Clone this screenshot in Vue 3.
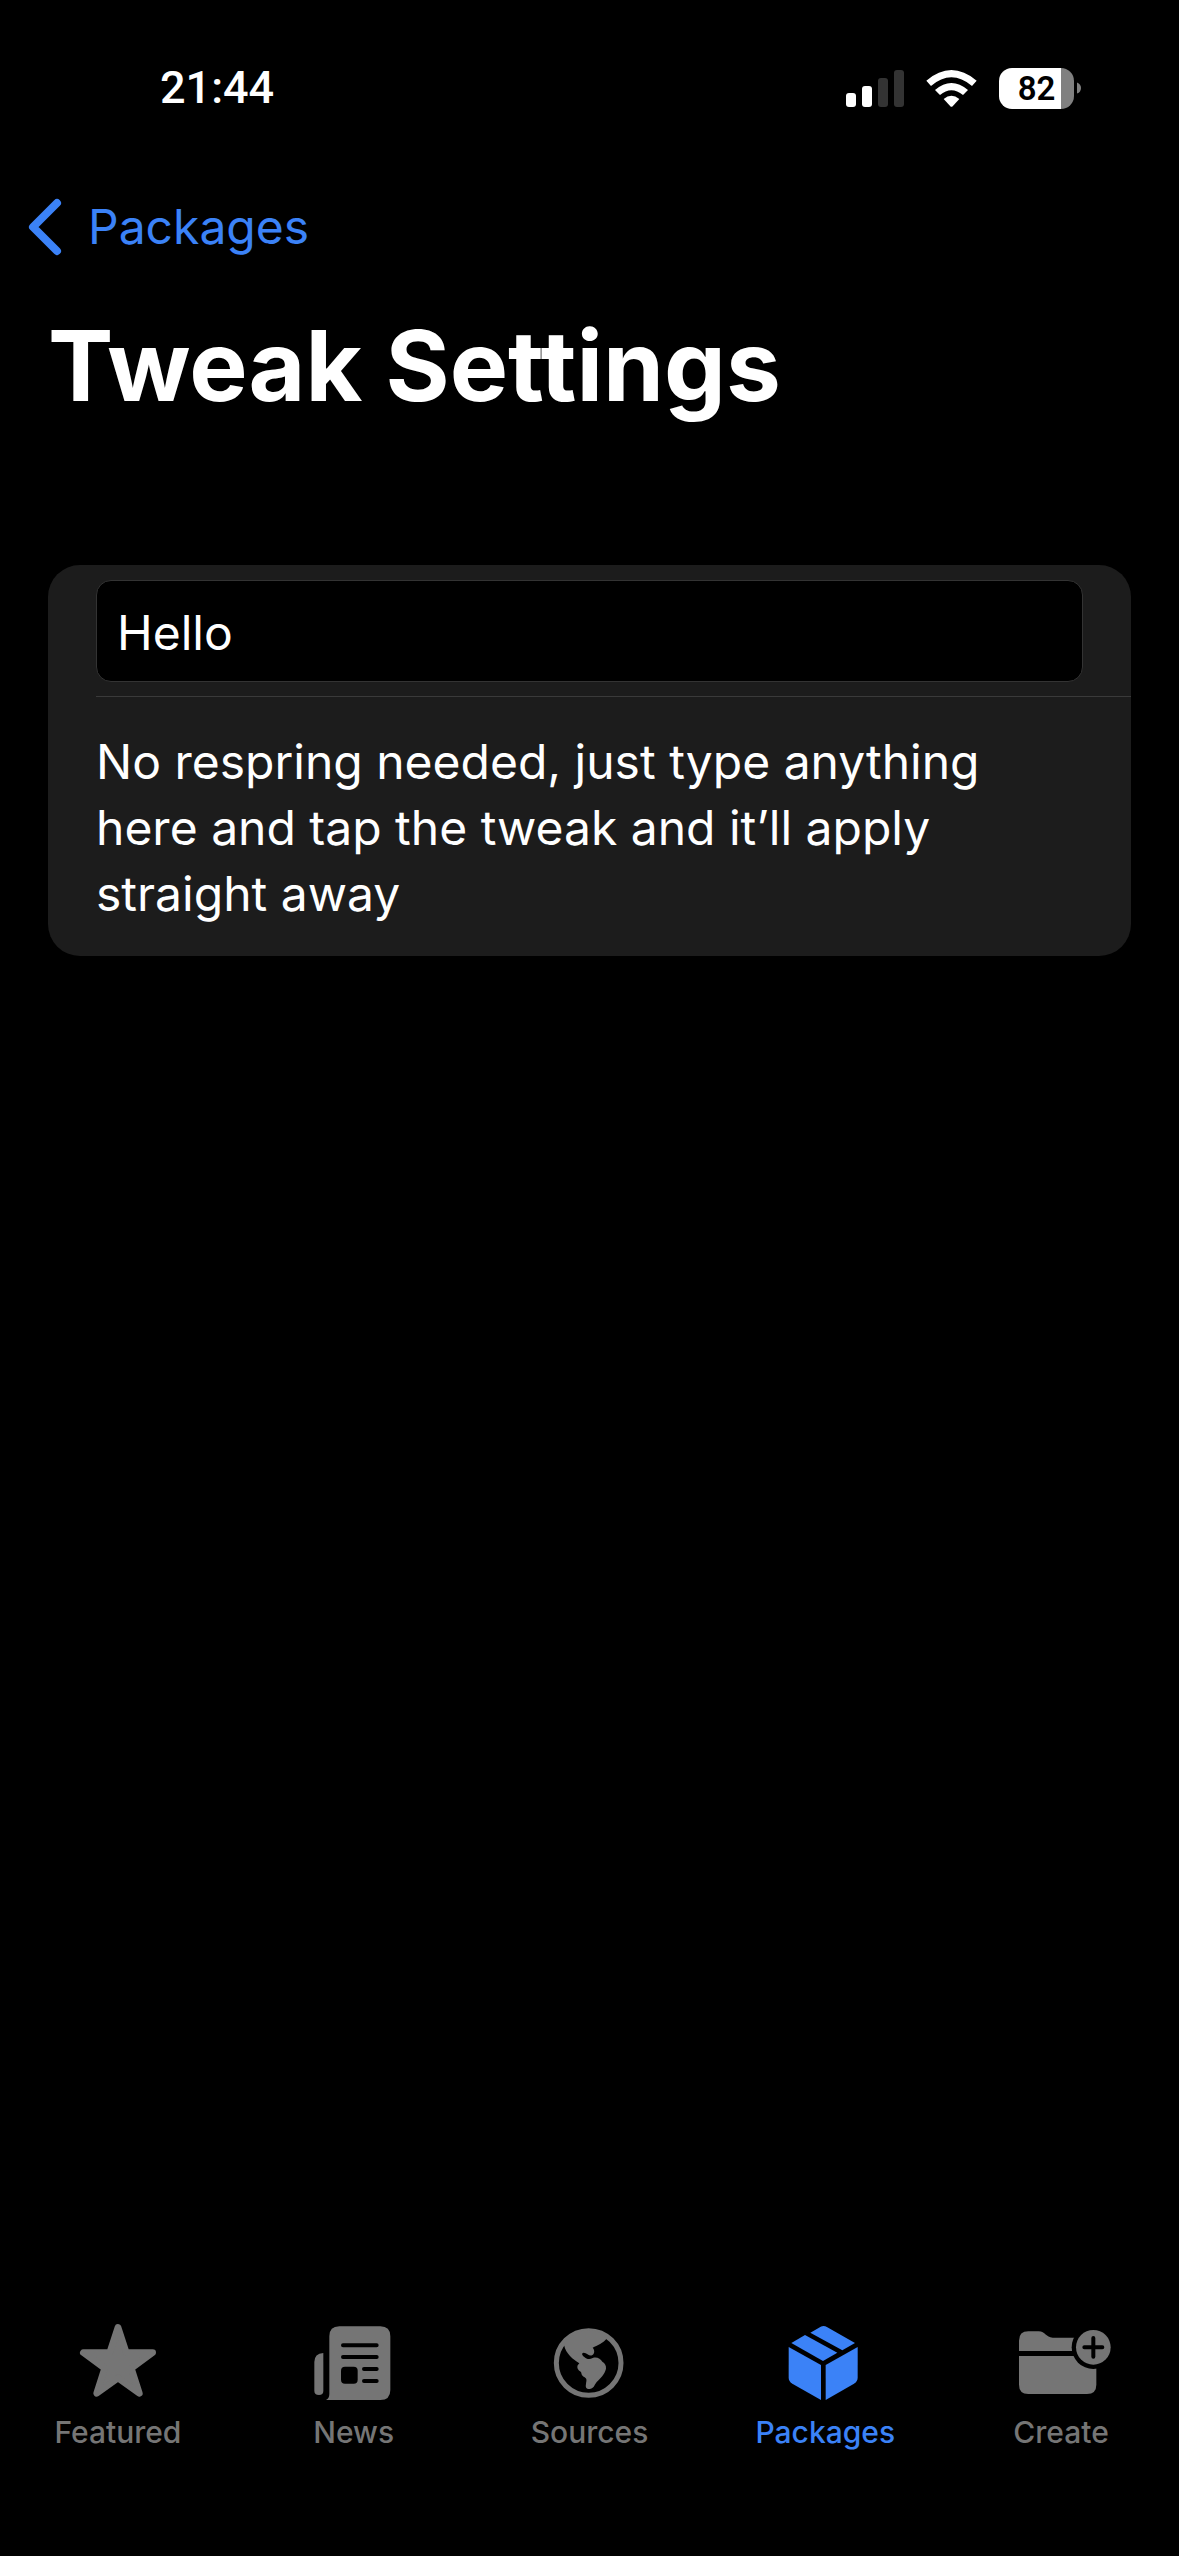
<script setup>
import { ref } from 'vue'

const message = ref('Hello')
const tabs = [
  { id: 'featured', label: 'Featured', viewBox: '85 30 300 252' },
  { id: 'news', label: 'News', viewBox: '71 30 300 252' },
  { id: 'sources', label: 'Sources', viewBox: '88 30 300 252' },
  { id: 'packages', label: 'Packages', viewBox: '106 30 300 252' },
  { id: 'create', label: 'Create', viewBox: '63 30 300 252' }
]
const active = ref('packages')
</script>

<template>
  <div class="screen">
    <header class="status">
      <time class="clock">21:44</time>
      <div class="indicators">
        <svg class="signal" viewBox="0 0 58 41" aria-hidden="true">
          <rect x="0" y="25" width="10" height="14" rx="3" fill="#fff" />
          <rect x="16" y="18" width="10" height="21" rx="3" fill="#fff" />
          <rect x="32" y="10" width="10" height="29" rx="3" fill="#333" />
          <rect x="48" y="2" width="10" height="37" rx="3" fill="#333" />
        </svg>
        <svg class="wifi" viewBox="318 51 153 123" aria-hidden="true" fill="#fff">
          <path d="M319 89 Q394 25 470 89 L456 105 Q394 53 333 105 Z" />
          <path d="M345 117 Q394 75 444 117 L429 132 Q394 103 360 132 Z" />
          <path d="M371 144 Q394 125 418 144 L398 166 Q394 169 391 166 Z" />
        </svg>
        <div class="battery">
          <span class="level">82</span>
          <svg class="cap" viewBox="0 0 5 14" aria-hidden="true"><path d="M0 0 Q5 2 5 7 Q5 12 0 14 Z" fill="#808080" /></svg>
        </div>
      </div>
    </header>

    <nav class="topbar">
      <a class="back" href="#packages">
        <svg class="chevron" viewBox="0 0 34 58" aria-hidden="true">
          <path d="M29 5 L5 29 L29 53" fill="none" stroke="currentColor" stroke-width="8" stroke-linecap="round" stroke-linejoin="round" />
        </svg>
        <span>Packages</span>
      </a>
    </nav>

    <main class="content">
      <h1>Tweak Settings</h1>
      <section class="card">
        <div class="field-row">
          <input v-model="message" class="field" type="text" aria-label="Text" />
        </div>
        <p class="note">No respring needed, just type anything here and tap the tweak and it’ll apply straight away</p>
      </section>
    </main>

    <nav class="tabbar">
      <button v-for="tab in tabs" :key="tab.id" type="button" class="tab" :class="{ active: tab.id === active }" @click="active = tab.id">
        <svg class="tab-icon" :viewBox="tab.viewBox" fill="currentColor" aria-hidden="true">
          <path v-if="tab.id === 'featured'" d="M235 52 L260 128 L339 128 L275 175 L299 250 L235 204 L171 250 L195 175 L131 128 L210 128 Z" stroke="currentColor" stroke-width="20" stroke-linejoin="round" />
          <g v-else-if="tab.id === 'news'">
            <path d="M147 79 Q147 49 177 49 H300 Q330 49 330 79 V240 Q330 270 300 270 H137 Q147 265 147 252 Z" />
            <path d="M129 129 V242 Q129 255 116 255 Q102 255 102 242 V156 Q102 131 129 129 Z" />
            <path d="M188 106 H289 M188 141 H289 M251 177 H289 M251 213 H289" stroke="#000" stroke-width="12" stroke-linecap="round" />
            <rect x="182" y="170" width="50" height="51" rx="12" fill="#000" />
          </g>
          <g v-else-if="tab.id === 'sources'">
            <circle cx="237" cy="159" r="97" fill="none" stroke="currentColor" stroke-width="15" />
            <path d="M163 104 Q190 62 237 60 Q270 62 293 83 C280 101 263 105 249 113 C256 121 255 131 247 136 C238 139 232 128 222 128 C215 129 217 136 223 140 C231 148 240 149 249 144 C263 140 272 147 278 155 C286 159 290 167 289 176 C285 193 272 205 261 216 C254 225 252 237 239 237 C229 237 227 231 229 222 C230 213 233 207 225 202 C216 197 216 193 214 186 C204 181 201 173 204 166 L209 160 C191 148 168 131 163 104 Z" />
          </g>
          <g v-else-if="tab.id === 'packages'">
            <path d="M212 68 L238 53 Q250 44 263 52 L346 99 L308 121 Z" />
            <path d="M155 99 L196 75 L293 128 L250 153 Z" />
            <path d="M147 111 L244 165 V270 L158 221 Q147 214 147 203 Z" />
            <path d="M354 111 L258 165 V270 L343 221 Q354 214 354 203 Z" />
          </g>
          <g v-else>
            <path d="M87 123 V92 Q87 64 115 64 H146 C166 64 168 83 188 83 H300 V123 Z" />
            <path d="M87 138 H319 V224 Q319 252 291 252 H115 Q87 252 87 224 Z" />
            <circle cx="310" cy="112" r="65" fill="#000" />
            <circle cx="310" cy="112" r="52" />
            <path d="M283 112 H337 M310 84 V140" stroke="#000" stroke-width="12" stroke-linecap="round" />
          </g>
        </svg>
        <span>{{ tab.label }}</span>
      </button>
    </nav>
  </div>
</template>

<style>
body {
  background: #000;
}
</style>

<style scoped>
.screen {
  display: flex;
  flex-direction: column;
  min-height: 100vh;
  background: #000;
  color: #fff;
  font-family: Inter, "Liberation Sans", sans-serif;
}
.status {
  display: flex;
  justify-content: space-between;
  align-items: center;
  padding: 60px 98px 0 160px;
  height: 56px;
}
.clock {
  font: 500 45px/56px Roboto, sans-serif;
}
.indicators {
  display: flex;
  align-items: center;
  gap: 22px;
}
.signal {
  width: 58px;
  height: 41px;
}
.wifi {
  width: 51px;
  height: 41px;
}
.battery {
  display: flex;
  align-items: center;
  gap: 3px;
}
.level {
  width: 75px;
  border-radius: 13px;
  background: linear-gradient(to right, #fff 62px, #808080 62px);
  color: #000;
  font: 600 33px/41px Roboto, sans-serif;
  text-align: center;
}
.cap {
  width: 4px;
  height: 14px;
}
.topbar {
  padding: 78px 28px 0;
}
.back {
  display: inline-flex;
  align-items: center;
  gap: 26px;
  color: #3b82f7;
  font-size: 48px;
  line-height: 66px;
  text-decoration: none;
}
.chevron {
  width: 34px;
  height: 58px;
}
.content {
  flex: 1;
  padding: 46px 48px 0;
}
h1 {
  margin: 0;
  font-size: 98px;
  font-weight: 700;
  line-height: 120px;
}
.card {
  margin-top: 139px;
  border-radius: 32px;
  background: #1c1c1c;
}
.field-row {
  margin-left: 48px;
  padding: 15px 48px 14px 0;
  border-bottom: 1px solid #3a3a3a;
}
.field {
  display: block;
  box-sizing: border-box;
  width: 100%;
  height: 102px;
  padding: 2px 20px 0;
  border: 1px solid #333;
  border-radius: 15px;
  outline: none;
  background: #000;
  color: #fff;
  font: 400 48px/66px Inter, "Liberation Sans", sans-serif;
}
.note {
  margin: 0;
  padding: 32px 48px 29px;
  font-size: 48px;
  line-height: 66px;
}
.tabbar {
  display: flex;
  padding-bottom: 106px;
}
.tab {
  display: flex;
  flex: 1;
  flex-direction: column;
  align-items: center;
  gap: 10px;
  padding: 0;
  border: 0;
  background: none;
  color: #757575;
  font: 500 30px/36px Inter, "Liberation Sans", sans-serif;
}
.tab.active {
  color: #3b82f7;
}
.tab-icon {
  width: 100px;
  height: 84px;
}
</style>
